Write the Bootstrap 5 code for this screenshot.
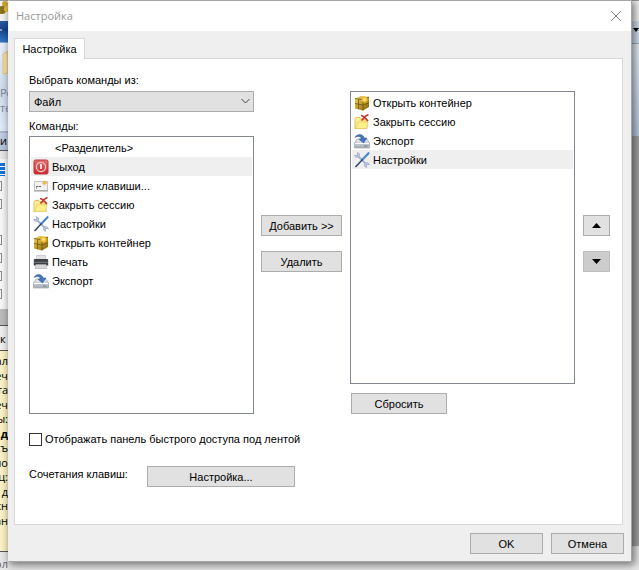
<!DOCTYPE html>
<html lang="ru">
<head>
<meta charset="utf-8">
<meta name="viewport" content="width=device-width, initial-scale=1">
<title>Настройка</title>
<link href="https://cdn.jsdelivr.net/npm/bootstrap@5.3.0/dist/css/bootstrap.min.css" rel="stylesheet">
<style>
body{font:11px/16px "Liberation Sans",Arial,sans-serif;color:#000;background:#e8e8e8}
.app-window{height:100vh;font-family:"Open Sans","Noto Sans",sans-serif;white-space:nowrap}
.side-col{width:8px}
.ui-text{font-size:11px;line-height:15px}
.app-top{height:21px;background:#f4f4f4;border-top:1px solid #999}
.tab-strip{height:22px;background:linear-gradient(#2b5aa5,#174589 40%,#3377c8);border-bottom:1px solid #88a9d0}
.tab-strip-r{height:23px;background:#d3e0ef;border-bottom:1px solid #9fb2c8}
.ribbon{height:90px;background:linear-gradient(#e8f0fa,#cfdded 55%,#e2edfa);border-bottom:2px solid #a9b8ca;color:#7d8699}
.folder-cut{height:42px}
.tree-head{height:18px;background:linear-gradient(#c3d2e4,#b4c4d8);border-bottom:1px solid #555}
.tree{height:150px;background:#f7f7f7}
.tree-cell{height:18px;padding-top:4px}
.tree-box{width:10px;height:10px;border:1px solid #8b8b8b;margin-left:-8px}
.tree-sel{width:5px;height:13px;background:repeating-linear-gradient(#1673d4 0 3px,#fff 3px 4px)}
.scroll-cut{height:16px;background:#bcbcbc}
.note-head{height:26px;background:#f0f0f0;border-top:1px solid #555;border-bottom:1px solid #555;padding-top:5px}
.note{height:201px;background:#fbf3c5;border-bottom:1px solid #555;padding-top:3px}
.note div{height:14px;line-height:14px;display:flex;justify-content:flex-end}
.note .gap-line{height:15px}
.canvas-r{height:411px;background:#a5a5a5;border-bottom:1px solid #ddd}
.ribbon-r{height:92px;background:linear-gradient(#e9f0f8,#b9cbe2)}
.app-status{height:25px;color:#666;padding-top:4px;width:8px;overflow:hidden;justify-content:flex-end}
.dialog-win{position:absolute;top:0;left:8px;right:7px;background:#efefef;border:1px solid #a5a5a5;border-left-color:#efefef;box-shadow:2px 2px 8px 1px rgba(0,0,0,.5)}
.dialog-title{height:30px;background:#fff;color:#999;padding:0 9px 0 7px;font:11px/16px "Open Sans","Noto Sans",sans-serif}
.close-x{border:0;background:none;padding:0;width:12px;height:12px;line-height:0}
.dialog-main{padding:7px 7px 7px 5px}
.tab-btn{border:1px solid #d9d9d9;border-bottom:0;background:#fff;width:71px;height:21px;padding:0;margin-bottom:-1px;position:relative;z-index:1}
.pane{background:#fff;border:1px solid #d9d9d9;padding:13px 12px 37px 14px;margin-right:1px}
.col-label{height:16px;margin-bottom:3px}
.col-label2{height:16px;margin:6px 0 2px}
.combo{position:relative}
.combo select{appearance:none;display:block;width:100%;height:21px;border:1px solid #adadad;border-radius:0;background:#e1e1e1;color:#000;padding:0 4px;font:inherit}
.combo svg{position:absolute;right:4px;top:7px;pointer-events:none}
.box-list{border:1px solid #828790;border-radius:0;background:#fff;padding:1px;margin:0;list-style:none}
.box-list.cmds{height:278px}
.box-list.bar{height:293px}
.item{height:19px;padding:0 0 0 2px;gap:3px}
.item.chosen{background:#efefef}
.item svg{width:16px;height:16px;flex:none}
.item.sep{padding-left:24px}
.cell{flex:1 1 0;min-width:0}
.mid{width:81px;margin:0 8px 0 7px;padding-top:143px}
.arrows{width:27px;margin-left:8px;padding-top:143px}
.right-cell{padding-top:19px}
.wbtn{border:1px solid #adadad;border-radius:0;background:#e1e1e1;color:#000;height:21px;padding:0;font:inherit;line-height:18px;text-align:center}
.wbtn.down{background:#ccc;border-color:#bfbfbf}
.wbtn svg{display:block;margin:auto}
.stack{gap:15px}
.reset{width:96px;margin:9px 0 0 1px}
.check-row{margin-top:17px;height:16px;gap:3px}
.check-row input{appearance:none;width:13px;height:13px;border:1px solid #333;background:#fff;margin:0}
.check-row input:checked{background:#333}
.keys-row{margin-top:19px;height:21px}
.keys-label{width:118px}
.keys-btn{width:148px}
.foot{padding-top:8px;gap:8px}
.foot .wbtn{width:73px}
</style>
<script src="https://cdn.jsdelivr.net/npm/bootstrap@5.3.0/dist/js/bootstrap.bundle.min.js"></script>
</head>
<body class="overflow-hidden">
<svg width="0" height="0" class="position-absolute" aria-hidden="true">
<defs>
<linearGradient id="gold" x2="1" y2="1"><stop stop-color="#f5de70"/><stop offset=".5" stop-color="#c19b27"/><stop offset="1" stop-color="#80620d"/></linearGradient>
<linearGradient id="red" y2="1" x2="0"><stop stop-color="#e0706f"/><stop offset="1" stop-color="#c9282b"/></linearGradient>
<linearGradient id="fold" x2="1" y2="1"><stop stop-color="#fff6a5"/><stop offset="1" stop-color="#f2d45f"/></linearGradient>
<linearGradient id="steel" x2="0" y2="1"><stop stop-color="#e9edf2"/><stop offset="1" stop-color="#a4abb5"/></linearGradient>
</defs>
<symbol id="i-exit" viewBox="0 0 16 16"><rect x="1" y="1" width="14" height="14" rx="1.5" fill="url(#red)" stroke="#c0393b"/><circle cx="8" cy="8" r="4.6" fill="none" stroke="#f6c9c9" stroke-width="1.3"/><path d="M8 5v5" stroke="#fff" stroke-width="1.6"/></symbol>
<symbol id="i-keys" viewBox="0 0 16 16"><path d="M1.500 3.500h13v9h-13z" fill="#f3f3f3" stroke="#c4c4c4"/><path d="M1 13h14" stroke="#999"/><path d="M3 8.500h2.500M6 8.500h2M3 10h1" stroke="#666" stroke-width="1.2"/><path d="M11.500 2.500v5M9 5h5" stroke="#f3c36b" stroke-width="1.500"/><circle cx="11.500" cy="5" r="1.500" fill="#f0b04c"/></symbol>
<symbol id="i-close" viewBox="0 0 16 16"><path d="M1 5l1-1.500h4L7.500 5H13v9.500H1z" fill="url(#fold)" stroke="#dfc05a"/><path d="M2 14.500L4 8h10l-1.500 6.500z" fill="#fff08c" stroke="#e6c761" stroke-width=".6"/><path d="M7 1.500c2.500.5 5 3 7 5.500M14.500.5C11.500 1.500 9 4 7.500 6.500" fill="none" stroke="#c8372b" stroke-width="1.600"/></symbol>
<symbol id="i-tools" viewBox="0 0 16 16"><path d="M3 3l10 10" stroke="#a5b3cf" stroke-width="1.800"/><path d="M.7 3.200L3 4l1-1L3.200.7C5.500.8 6.300 3 5 4.600 3.700 6 1 5.600.7 3.200zM15.300 12.800L13 12l-1 1 .8 2.300c-2.300-.1-3.100-2.300-1.800-3.900 1.300-1.400 4-1 4.300 1.400z" fill="#c8d2e8" stroke="#8da0c6" stroke-width=".7"/><path d="M14.500 1.200L8.500 7.500" stroke="#4c87cf" stroke-width="2.200" stroke-linecap="round"/><path d="M8.500 7.500l-7 7.500" stroke="#263f68" stroke-width="1.400"/></symbol>
<symbol id="i-box" viewBox="0 0 16 16"><path d="M1 3.500L7 1l8 1v10l-6 3.500-8-2z" fill="url(#gold)"/><path d="M1 3.500l8 1.300V15.500M9 4.800L15 2M1 8.500l8 1.500 6-2M4.500 4.200v10" fill="none" stroke="#705712" stroke-width=".8"/><circle cx="10.500" cy="4.500" r="3" fill="#f6bd34"/><circle cx="10.500" cy="4.500" r="1.200" fill="#fff0a4"/></symbol>
<symbol id="i-print" viewBox="0 0 16 16"><path d="M3.500 1.500h9v4h-9z" fill="#e3e3e3" stroke="#bbb" stroke-width=".6"/><path d="M.8 6q0-1 1-1h12.400q1 0 1 1v5.500H.8z" fill="#3d4045"/><path d="M1 8.300h14" stroke="#777b82"/><path d="M3 10.500h10l1 4H2z" fill="#d5d6d8" stroke="#aaa" stroke-width=".6"/></symbol>
<symbol id="i-export" viewBox="0 0 16 16"><path d="M3 6h10l2.500 4v5H.5v-5z" fill="url(#steel)" stroke="#9da4ae" stroke-width=".7"/><path d="M1 10.500h14" stroke="#fff"/><path d="M10 13h3.500" stroke="#777f8b"/><path d="M1 4.500C3 .5 8.500.2 10.300 5H13L9.500 10 5 6.200l2.500-.7C6.500 3.200 3.800 2.700 1 4.500z" fill="#4475bd" stroke="#2f5799" stroke-width=".5"/></symbol>
</svg>

<div class="app-window d-flex flex-column overflow-hidden" aria-hidden="true">
  <div class="d-flex justify-content-between">
    <div class="side-col ui-text overflow-hidden">
      <div class="app-top"><svg width="10" height="14" class="d-block"><circle cx="5" cy="3" r="3" fill="#d1a82e"/><circle cx="2" cy="9" r="4" fill="#8a741c"/><circle cx="7" cy="8" r="3" fill="#e8c54b"/></svg></div>
      <div class="tab-strip"><svg width="8" height="20" class="d-block"><path d="M0 9h2" stroke="#fff"/></svg></div>
      <div class="ribbon"><svg width="10" height="42" class="folder-cut d-block"><path d="M3 31V11l5-3v22z" fill="#f6e5ab" stroke="#dfc67e"/></svg><div>Ре</div><div>те</div></div>
      <div class="tree-head">и</div>
      <div class="tree">
        <div class="tree-cell mt-2"><div class="tree-sel"></div></div>
        <div class="tree-cell"><div class="tree-box"></div></div><div class="tree-cell"><div class="tree-box"></div></div><div class="tree-cell"></div>
        <div class="tree-cell"><div class="tree-box"></div></div><div class="tree-cell"><div class="tree-box"></div></div><div class="tree-cell"><div class="tree-box"></div></div><div class="tree-cell"><div class="tree-box"></div></div>
      </div>
      <div class="scroll-cut"></div>
      <div class="note-head">к</div>
      <div class="note"><div class="gap-line">ал</div><div>еч</div><div class="gap-line">та</div><div>еч</div><div class="gap-line">ы:</div><div class="fw-bold">д</div><div class="gap-line">съ</div><div>по</div><div class="gap-line">ц:</div><div>д</div><div class="gap-line">жн</div><div>ан</div></div>
    </div>
    <div class="side-col overflow-hidden">
      <div class="app-top"></div>
      <div class="tab-strip-r"><svg width="8" height="20" class="d-block"><path d="M2 7h6l-3 4z"/></svg></div>
      <div class="ribbon-r"></div>
      <div class="canvas-r"></div>
    </div>
  </div>
  <div class="app-status d-flex">ол</div>
</div>

<main class="dialog-win" role="dialog" aria-label="Настройка">
  <div class="dialog-title d-flex align-items-center justify-content-between">
    <span>Настройка</span>
    <button class="close-x" type="button" aria-label="Закрыть"><svg width="12" height="12"><path d="M1 1l10 10M11 1L1 11" stroke="#888"/></svg></button>
  </div>
  <div class="dialog-main">
    <button class="tab-btn d-block" type="button">Настройка</button>
    <section class="pane">
      <div class="d-flex align-items-start">
        <div class="cell">
          <label class="col-label d-block" for="src">Выбрать команды из:</label>
          <div class="combo"><select id="src"><option>Файл</option></select><svg width="9" height="7"><path d="M.5 1l4 4 4-4" fill="none" stroke="#444"/></svg></div>
          <div class="col-label2" id="cmds">Команды:</div>
          <ul class="box-list cmds" aria-labelledby="cmds">
            <li class="item sep d-flex align-items-center">&lt;Разделитель&gt;</li>
            <li class="item chosen d-flex align-items-center"><svg><use href="#i-exit"/></svg>Выход</li>
            <li class="item d-flex align-items-center"><svg><use href="#i-keys"/></svg>Горячие клавиши...</li>
            <li class="item d-flex align-items-center"><svg><use href="#i-close"/></svg>Закрыть сессию</li>
            <li class="item d-flex align-items-center"><svg><use href="#i-tools"/></svg>Настройки</li>
            <li class="item d-flex align-items-center"><svg><use href="#i-box"/></svg>Открыть контейнер</li>
            <li class="item d-flex align-items-center"><svg><use href="#i-print"/></svg>Печать</li>
            <li class="item d-flex align-items-center"><svg><use href="#i-export"/></svg>Экспорт</li>
          </ul>
        </div>
        <div class="mid d-flex flex-column stack">
          <button class="wbtn" type="button">Добавить &gt;&gt;</button>
          <button class="wbtn" type="button">Удалить</button>
        </div>
        <div class="cell right-cell">
          <ul class="box-list bar" aria-label="Панель быстрого доступа">
            <li class="item d-flex align-items-center"><svg><use href="#i-box"/></svg>Открыть контейнер</li>
            <li class="item d-flex align-items-center"><svg><use href="#i-close"/></svg>Закрыть сессию</li>
            <li class="item d-flex align-items-center"><svg><use href="#i-export"/></svg>Экспорт</li>
            <li class="item chosen d-flex align-items-center"><svg><use href="#i-tools"/></svg>Настройки</li>
          </ul>
          <button class="wbtn reset d-block" type="button">Сбросить</button>
        </div>
        <div class="arrows d-flex flex-column stack">
          <button class="wbtn" type="button" aria-label="Вверх"><svg width="9" height="5"><path d="M0 5h9L4.500 0z"/></svg></button>
          <button class="wbtn down" type="button" aria-label="Вниз"><svg width="9" height="5"><path d="M0 0h9L4.500 5z"/></svg></button>
        </div>
      </div>
      <div class="check-row d-flex align-items-center"><input type="checkbox" id="below"><label for="below">Отображать панель быстрого доступа под лентой</label></div>
      <div class="keys-row d-flex"><label class="keys-label" for="keys">Сочетания клавиш:</label><button class="wbtn keys-btn" type="button" id="keys">Настройка...</button></div>
    </section>
    <div class="foot d-flex justify-content-end"><button class="wbtn" type="button">OK</button><button class="wbtn" type="button">Отмена</button></div>
  </div>
</main>
</body>
</html>
